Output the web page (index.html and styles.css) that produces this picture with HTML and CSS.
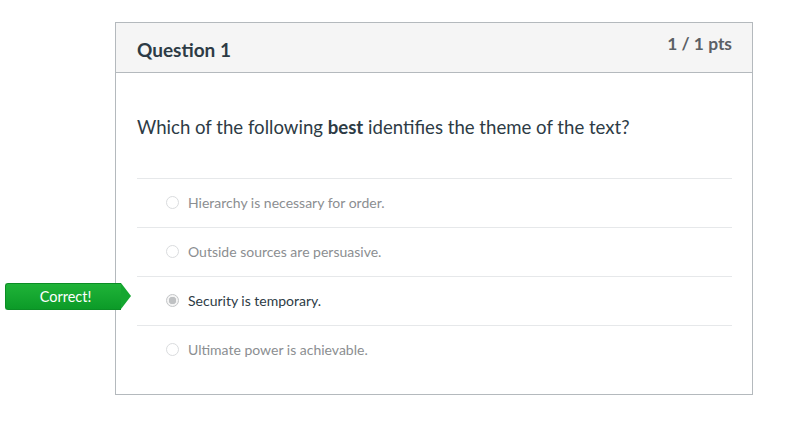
FILE: index.html
```html
<!DOCTYPE html>
<html>
<head>
<meta charset="utf-8">
<link rel="stylesheet" href="styles.css">
</head>
<body>
<div class="question">
  <div class="header">
    <span class="title">Question 1</span>
    <span class="pts">1 / 1 pts</span>
  </div>
  <div class="content">
    <p class="text">Which of the following <b>best</b> identifies the theme of the text?</p>
    <div class="answers">
      <div class="answer"><span class="radio"></span><span class="label">Hierarchy is necessary for order.</span></div>
      <div class="answer"><span class="radio"></span><span class="label">Outside sources are persuasive.</span></div>
      <div class="answer selected"><span class="badge">Correct!</span><span class="radio checked"></span><span class="label">Security is temporary.</span></div>
      <div class="answer"><span class="radio"></span><span class="label">Ultimate power is achievable.</span></div>
    </div>
  </div>
</div>
</body>
</html>
```
FILE: styles.css
```css
html, body { margin: 0; padding: 0; background: #fff; }
body { font-family: Lato, "Open Sans", sans-serif; color: #2d3b45; }
.question {
  margin: 22px 0 0 115px;
  width: 636px;
  border: 1px solid #b4b9bd;
}
.header {
  height: 49px;
  background: #f5f5f5;
  border-bottom: 1px solid #b4b9bd;
  display: flex;
  justify-content: space-between;
  padding: 0 20px 0 21px;
  position: relative;
}
.title { font-size: 19px; font-weight: 700; line-height: 20px; margin-top: 17px; color: #2d3b45; }
.pts { font-size: 17.4px; font-weight: 700; color: #5b6065; line-height: 18px; margin-top: 12px; }
.content { padding: 0 20px 20px 21px; }
.text { margin: 0; padding: 43px 0 0; height: 62px; font-size: 18.6px; line-height: 22px; }
.text b { font-weight: 700; }
.answers { display: flex; flex-direction: column; }
.answer {
  height: 48px;
  border-top: 1px solid #e6e8ea;
  display: flex;
  align-items: center;
  padding-left: 29px;
  position: relative;
}
.radio {
  border: 1px solid #dadcde;
  border-radius: 50%;
  background: #fff;
  margin-right: 9px;
  margin-top: -1px;
  box-sizing: border-box;
  width: 13px; height: 13px;
}
.radio.checked {
  border: 1px solid #c4c6c8;
  background: radial-gradient(circle, #bfc1c3 0 3.5px, #f4f4f4 4px);
}
.label { font-size: 14px; color: #8b8e91; line-height: 18px; }
.selected .label { color: #2d3b45; }
.badge {
  position: absolute;
  left: -132px;
  top: 6px;
  width: 116px;
  height: 27px;
  background: linear-gradient(#1fb338, #0c9b28);
  border: 1px solid #0b8e25;
  border-right: none;
  border-radius: 3px 0 0 3px;
  color: #fff;
  font-size: 14.5px;
  line-height: 25px;
  text-align: center;
  padding-left: 4px;
  box-sizing: border-box;
}
.badge::after {
  content: "";
  position: absolute;
  right: -10px;
  top: -1px;
  border-top: 13.5px solid transparent;
  border-bottom: 13.5px solid transparent;
  border-left: 10px solid #14a730;
}
```
